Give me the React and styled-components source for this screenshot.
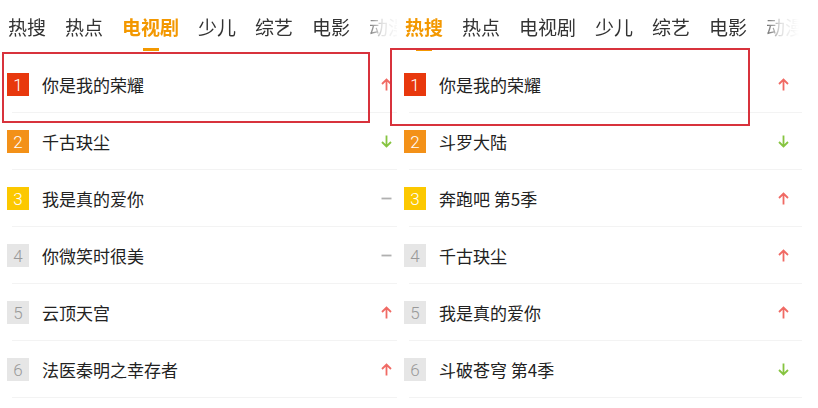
import React from "react";
import styled, { createGlobalStyle } from "styled-components";

const GlobalStyle = createGlobalStyle`
  body {
    margin: 0;
    background: #fff;
    font-family: "Noto Sans CJK SC", "Noto Sans", sans-serif;
  }
`;

const Page = styled.div`
  position: relative;
  display: flex;
  width: 818px;
  height: 408px;
  overflow: hidden;
  background: #fff;
`;

const Panel = styled.div`
  width: ${(p) => p.$width}px;
  flex: none;
  overflow: hidden;
`;

const TabBar = styled.div`
  display: flex;
  gap: 19px;
  height: 56px;
  padding-left: 8px;
  white-space: nowrap;
  mask-image: linear-gradient(to right, #000 ${(p) => p.$fade}px, rgba(0,0,0,0.15) ${(p) => p.$fade + 22}px, transparent ${(p) => p.$fade + 40}px);
`;

const Tab = styled.div`
  position: relative;
  flex: none;
  font-size: 19px;
  line-height: 54px;
  color: ${(p) => (p.$active ? "#f39800" : "#333")};
  font-weight: ${(p) => (p.$active ? 700 : 400)};

  &::after {
    content: "";
    display: ${(p) => (p.$active ? "block" : "none")};
    position: absolute;
    left: 50%;
    bottom: 5px;
    width: 16px;
    height: 3px;
    margin-left: -8px;
    background: #f39800;
  }
`;

const List = styled.div`
  width: 405px;
`;

const Row = styled.div`
  position: relative;
  display: flex;
  align-items: center;
  height: 57px;
  padding: 0 13px 0 7px;
  box-sizing: border-box;

  &::after {
    content: "";
    position: absolute;
    left: 12px;
    right: 0;
    bottom: 0;
    height: 1px;
    background: #f3f3f3;
  }
`;

const rankColors = ["#e8380d", "#f39118", "#fcc800"];

const Rank = styled.div`
  width: 22px;
  height: 23px;
  flex: none;
  display: flex;
  align-items: center;
  justify-content: center;
  font-family: Roboto, "Liberation Sans", sans-serif;
  font-size: 17px;
  font-weight: 300;
  color: ${(p) => (p.$n <= 3 ? "#fff" : "#999")};
  background: ${(p) => rankColors[p.$n - 1] || "#e6e6e6"};
`;

const Title = styled.div`
  flex: 1;
  margin-left: 13px;
  font-size: 17px;
  color: #222;
`;

const Trend = styled.div`
  width: 12px;
  height: 14px;
  flex: none;
  display: flex;
  align-items: center;
  justify-content: center;
`;

const Highlight = styled.div`
  position: absolute;
  left: ${(p) => p.$x}px;
  top: ${(p) => p.$y}px;
  width: ${(p) => p.$w}px;
  height: ${(p) => p.$h}px;
  border: 2px solid #d8323c;
  box-sizing: border-box;
  pointer-events: none;
`;

const TrendIcon = ({ dir }) => {
  if (dir === "up")
    return (
      <svg width="11" height="13" viewBox="0 0 11 13">
        <path d="M5.5 12.5V1.5M1 6l4.5-4.5L10 6" fill="none" stroke="#f06a64" strokeWidth="1.8" />
      </svg>
    );
  if (dir === "down")
    return (
      <svg width="11" height="13" viewBox="0 0 11 13">
        <path d="M5.5 0.5v11M1 7l4.5 4.5L10 7" fill="none" stroke="#86c440" strokeWidth="1.8" />
      </svg>
    );
  return (
    <svg width="11" height="13" viewBox="0 0 11 13">
      <path d="M0.5 6.5h10" stroke="#b0b0b0" strokeWidth="1.8" />
    </svg>
  );
};

const tabs = ["热搜", "热点", "电视剧", "少儿", "综艺", "电影", "动漫"];

const left = [
  ["你是我的荣耀", "up"],
  ["千古玦尘", "down"],
  ["我是真的爱你", "flat"],
  ["你微笑时很美", "flat"],
  ["云顶天宫", "up"],
  ["法医秦明之幸存者", "up"],
];

const right = [
  ["你是我的荣耀", "up"],
  ["斗罗大陆", "down"],
  ["奔跑吧 第5季", "up"],
  ["千古玦尘", "up"],
  ["我是真的爱你", "up"],
  ["斗破苍穹 第4季", "down"],
];

const Board = ({ width, active, fade, items }) => (
  <Panel $width={width}>
    <TabBar $fade={fade}>
      {tabs.map((t) => (
        <Tab key={t} $active={t === active}>
          {t}
        </Tab>
      ))}
    </TabBar>
    <List>
      {items.map(([name, dir], i) => (
        <Row key={name + i}>
          <Rank $n={i + 1}>{i + 1}</Rank>
          <Title>{name}</Title>
          <Trend>
            <TrendIcon dir={dir} />
          </Trend>
        </Row>
      ))}
    </List>
  </Panel>
);

export default function App() {
  return (
    <>
      <GlobalStyle />
      <Page>
        <Board width={397} active="电视剧" fade={360} items={left} />
        <Board width={421} active="热搜" fade={362} items={right} />
        <Highlight $x={2} $y={52} $w={368} $h={71} />
        <Highlight $x={390} $y={48} $w={360} $h={78} />
      </Page>
    </>
  );
}
